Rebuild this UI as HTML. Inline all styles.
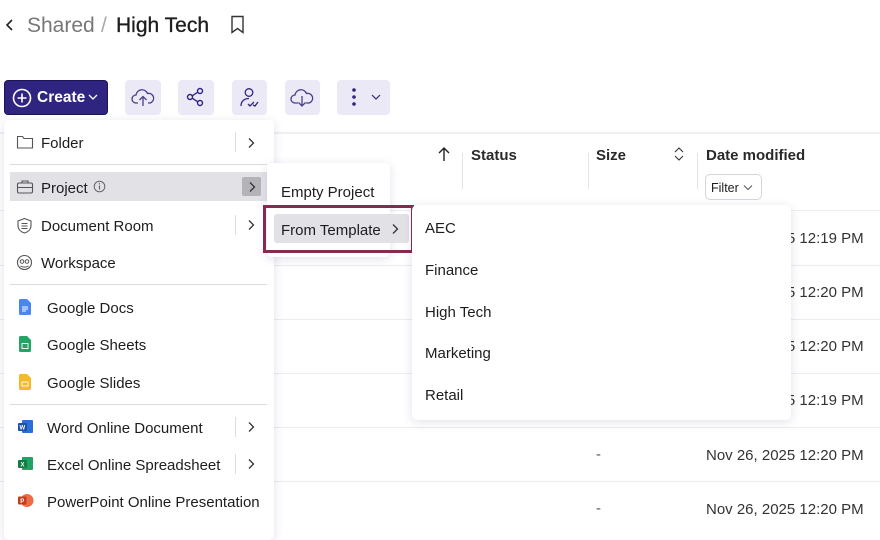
<!DOCTYPE html>
<html><head><style>
*{margin:0;padding:0;box-sizing:border-box}
body{width:880px;height:524px;overflow:hidden;background:#fff;font-family:"Liberation Sans",sans-serif;color:#1d1d1f;position:relative}
.a{position:absolute}
.t{position:absolute;font-size:15px;white-space:nowrap;line-height:1;margin-top:1px}
.btn{position:absolute;top:80px;height:35px;background:#ece9f7;border-radius:4px}
.sep{position:absolute;height:1px;background:#ececef}
.menu{position:absolute;background:#fff;border-radius:5px;box-shadow:0 2px 10px rgba(60,50,120,.15)}
.ic{position:absolute}
</style></head><body>
<!-- header -->
<svg class="a" style="left:4px;top:17px" width="10" height="16"><path d="M8 3L3 8l5 5" fill="none" stroke="#222" stroke-width="1.6"/></svg>
<div class="t" style="left:27px;top:14px;font-size:21px;color:#777">Shared</div>
<div class="t" style="left:101px;top:14px;font-size:21px;color:#aaa">/</div>
<div class="t" style="left:116px;top:14px;font-size:21px;color:#1d1d1f;-webkit-text-stroke:.3px #1d1d1f">High Tech</div>
<svg class="a" style="left:230px;top:15px" width="16" height="20"><path d="M2 1.5h11v16l-5.5-4-5.5 4z" fill="none" stroke="#333" stroke-width="1.4"/></svg>
<!-- toolbar -->
<div class="a" style="left:4px;top:80px;width:104px;height:35px;background:#2f2580;border:1px solid #1b1456;border-radius:4px"></div>
<svg class="a" style="left:11px;top:87px" width="22" height="22"><circle cx="11" cy="11" r="8.5" fill="none" stroke="#fff" stroke-width="1.6"/><path d="M11 6.5v9M6.5 11h9" stroke="#fff" stroke-width="1.6"/></svg>
<div class="t" style="left:37px;top:89px;color:#fff;font-weight:bold;font-size:15.5px">Create</div>
<svg class="a" style="left:88px;top:93px" width="10" height="8"><path d="M1 2l4 4 4-4" fill="none" stroke="#fff" stroke-width="1.3"/></svg>
<div class="btn" style="left:125px;width:36px"></div>
<svg class="a" style="left:131px;top:86px" width="24" height="22"><path d="M7 17H5a4 4 0 0 1 0-8 6 6 0 0 1 11.5-1.5A4.5 4.5 0 0 1 19 17h-2" fill="none" stroke="#4a3f8a" stroke-width="1.3"/><path d="M12 20v-9M8.5 14L12 10.5 15.5 14" fill="none" stroke="#4a3f8a" stroke-width="1.3"/></svg>
<div class="btn" style="left:178px;width:36px"></div>
<svg class="a" style="left:185px;top:86px" width="22" height="22"><circle cx="15" cy="5" r="2.5" fill="none" stroke="#2f2580" stroke-width="1.4"/><circle cx="5" cy="11" r="2.5" fill="none" stroke="#2f2580" stroke-width="1.4"/><circle cx="15" cy="17" r="2.5" fill="none" stroke="#2f2580" stroke-width="1.4"/><path d="M7.2 9.8l5.6-3.6M7.2 12.2l5.6 3.6" stroke="#2f2580" stroke-width="1.4"/></svg>
<div class="btn" style="left:232px;width:35px"></div>
<svg class="a" style="left:238px;top:86px" width="24" height="24"><circle cx="11" cy="6.5" r="3.8" fill="none" stroke="#2f2580" stroke-width="1.3"/><path d="M3 20c0-5 3.5-7.5 8-7.5M10 18l2 2 4-4M15 19l2 1 3-4" fill="none" stroke="#2f2580" stroke-width="1.3"/></svg>
<div class="btn" style="left:285px;width:35px"></div>
<svg class="a" style="left:290px;top:86px" width="24" height="22"><path d="M8 17H5a4 4 0 0 1 0-8 6 6 0 0 1 11.5-1.5A4.5 4.5 0 0 1 19 17h-3" fill="none" stroke="#4a3f8a" stroke-width="1.3"/><path d="M12 10v10M8.5 16.5L12 20l3.5-3.5" fill="none" stroke="#4a3f8a" stroke-width="1.3"/></svg>
<div class="btn" style="left:337px;width:53px"></div>
<svg class="a" style="left:350px;top:87px" width="8" height="22"><circle cx="4" cy="3" r="1.8" fill="#2f2580"/><circle cx="4" cy="10" r="1.8" fill="#2f2580"/><circle cx="4" cy="17" r="1.8" fill="#2f2580"/></svg>
<svg class="a" style="left:371px;top:93px" width="10" height="8"><path d="M1 2l4 4 4-4" fill="none" stroke="#2f2580" stroke-width="1.2"/></svg>
<!-- table -->
<div class="sep" style="left:0;top:132px;width:880px;height:2px;background:#f0f0f3"></div>
<svg class="a" style="left:437px;top:146px" width="14" height="16"><path d="M7 15V2M2 7l5-5 5 5" fill="none" stroke="#222" stroke-width="1.4"/></svg>
<div class="a" style="left:462px;top:153px;width:1px;height:36px;background:#e4e4e8"></div>
<div class="t" style="left:471px;top:147px;font-weight:bold;color:#2a2a2a">Status</div>
<div class="a" style="left:588px;top:153px;width:1px;height:36px;background:#e4e4e8"></div>
<div class="t" style="left:596px;top:147px;font-weight:bold;color:#2a2a2a">Size</div>
<svg class="a" style="left:673px;top:146px" width="12" height="16"><path d="M2 6l4-4 4 4M2 10l4 4 4-4" fill="none" stroke="#333" stroke-width="1.1"/></svg>
<div class="a" style="left:697px;top:153px;width:1px;height:36px;background:#e4e4e8"></div>
<div class="t" style="left:706px;top:147px;font-weight:bold;color:#2a2a2a">Date modified</div>
<div class="a" style="left:705px;top:174px;width:57px;height:26px;border:1px solid #d6d6dc;border-radius:5px"></div>
<div class="t" style="left:711px;top:181px;font-size:12.5px">Filter</div>
<svg class="a" style="left:743px;top:184px" width="10" height="7"><path d="M1 1.5l4 4 4-4" fill="none" stroke="#555" stroke-width="1"/></svg>
<div class="sep" style="left:0;top:210px;width:880px"></div>
<div class="sep" style="left:0;top:265px;width:880px"></div>
<div class="sep" style="left:0;top:319px;width:880px"></div>
<div class="sep" style="left:0;top:373px;width:880px"></div>
<div class="sep" style="left:0;top:427px;width:880px"></div>
<div class="sep" style="left:0;top:481px;width:880px"></div>
<div class="t" style="left:706px;top:230px;color:#333">Nov 26, 2025 12:19 PM</div>
<div class="t" style="left:706px;top:284px;color:#333">Nov 26, 2025 12:20 PM</div>
<div class="t" style="left:706px;top:338px;color:#333">Nov 26, 2025 12:20 PM</div>
<div class="t" style="left:706px;top:392px;color:#333">Nov 26, 2025 12:19 PM</div>
<div class="t" style="left:596px;top:446px;color:#555">-</div>
<div class="t" style="left:706px;top:447px;color:#333">Nov 26, 2025 12:20 PM</div>
<div class="t" style="left:596px;top:500px;color:#555">-</div>
<div class="t" style="left:706px;top:501px;color:#333">Nov 26, 2025 12:20 PM</div>
<!-- menu 1 -->
<div class="menu" style="left:4px;top:120px;width:270px;height:420px"></div>
<svg class="ic" style="left:16px;top:134px" width="18" height="16"><path d="M1.5 2.5h5l1.5 2h8.5v9.5h-15z" fill="none" stroke="#555" stroke-width="1.1"/></svg>
<div class="t" style="left:41px;top:135px">Folder</div>
<div class="a" style="left:235px;top:132px;width:1px;height:20px;background:#ddd"></div>
<svg class="a" style="left:247px;top:137px" width="8" height="12"><path d="M2 1.5l4.5 4.5L2 10.5" fill="none" stroke="#333" stroke-width="1.3"/></svg>
<div class="sep" style="left:10px;top:164px;width:257px;background:#dcdce0"></div>
<div class="a" style="left:10px;top:172px;width:257px;height:29px;background:#e2e2e6"></div>
<svg class="ic" style="left:16px;top:179px" width="18" height="16"><rect x="1.5" y="4" width="15" height="10" rx="1.5" fill="none" stroke="#555" stroke-width="1.1"/><path d="M6 4V2h6v2M1.5 8.5h15" fill="none" stroke="#555" stroke-width="1.1"/></svg>
<div class="t" style="left:41px;top:180px">Project</div>
<svg class="a" style="left:93px;top:180px" width="13" height="13"><circle cx="6.5" cy="6.5" r="5.3" fill="none" stroke="#666" stroke-width="1"/><path d="M6.5 5.5v4" stroke="#666" stroke-width="1.2"/><circle cx="6.5" cy="3.8" r=".7" fill="#666"/></svg>
<div class="a" style="left:242px;top:177px;width:19px;height:19px;background:#b4b4b8;border-radius:2px"></div>
<svg class="a" style="left:248px;top:181px" width="8" height="12"><path d="M2 1.5l4.5 4.5L2 10.5" fill="none" stroke="#333" stroke-width="1.3"/></svg>
<svg class="ic" style="left:16px;top:217px" width="17" height="17"><path d="M8.5 1.5l6.5 2.5v4.5c0 4-3 6.5-6.5 7.5-3.5-1-6.5-3.5-6.5-7.5V4z" fill="none" stroke="#555" stroke-width="1.1"/><path d="M5.5 6.5h6M5.5 9h6M5.5 11.5h6" stroke="#555" stroke-width="1"/></svg>
<div class="t" style="left:41px;top:218px">Document Room</div>
<div class="a" style="left:235px;top:215px;width:1px;height:20px;background:#ddd"></div>
<svg class="a" style="left:247px;top:219px" width="8" height="12"><path d="M2 1.5l4.5 4.5L2 10.5" fill="none" stroke="#333" stroke-width="1.3"/></svg>
<svg class="ic" style="left:16px;top:254px" width="17" height="17"><circle cx="8.5" cy="8.5" r="7" fill="none" stroke="#555" stroke-width="1.1"/><circle cx="6" cy="7.5" r="1.8" fill="none" stroke="#555"/><circle cx="11" cy="7.5" r="1.8" fill="none" stroke="#555"/><path d="M4.5 12c2 1.5 6 1.5 8 0" fill="none" stroke="#555"/></svg>
<div class="t" style="left:41px;top:255px">Workspace</div>
<div class="sep" style="left:10px;top:284px;width:257px;background:#dcdce0"></div>
<svg class="ic" style="left:19px;top:299px" width="12" height="16"><path d="M0 1.5A1.5 1.5 0 0 1 1.5 0H8l4 4v10.5A1.5 1.5 0 0 1 10.5 16h-9A1.5 1.5 0 0 1 0 14.5z" fill="#4a86f0"/><path d="M3 8h6M3 10h6M3 12h4" stroke="#fff" stroke-width=".9"/></svg>
<div class="t" style="left:47px;top:300px">Google Docs</div>
<svg class="ic" style="left:19px;top:336px" width="12" height="16"><path d="M0 1.5A1.5 1.5 0 0 1 1.5 0H8l4 4v10.5A1.5 1.5 0 0 1 10.5 16h-9A1.5 1.5 0 0 1 0 14.5z" fill="#21a464"/><rect x="3" y="7.5" width="6" height="5" fill="none" stroke="#fff" stroke-width=".9"/></svg>
<div class="t" style="left:47px;top:337px">Google Sheets</div>
<svg class="ic" style="left:19px;top:374px" width="12" height="16"><path d="M0 1.5A1.5 1.5 0 0 1 1.5 0H8l4 4v10.5A1.5 1.5 0 0 1 10.5 16h-9A1.5 1.5 0 0 1 0 14.5z" fill="#f5b92c"/><rect x="3" y="8" width="6" height="4" fill="none" stroke="#fff" stroke-width=".9"/></svg>
<div class="t" style="left:47px;top:375px">Google Slides</div>
<div class="sep" style="left:10px;top:404px;width:257px;background:#dcdce0"></div>
<svg class="ic" style="left:18px;top:419px" width="16" height="15"><rect x="4" y="1" width="11" height="13" rx="1" fill="#2b6fd6"/><rect x="0" y="4" width="9" height="8" rx="1" fill="#1b4fa8"/><text x="1.5" y="10.5" font-size="6" fill="#fff" font-family="Liberation Sans" font-weight="bold">W</text></svg>
<div class="t" style="left:47px;top:420px">Word Online Document</div>
<div class="a" style="left:235px;top:417px;width:1px;height:20px;background:#ddd"></div>
<svg class="a" style="left:247px;top:421px" width="8" height="12"><path d="M2 1.5l4.5 4.5L2 10.5" fill="none" stroke="#333" stroke-width="1.3"/></svg>
<svg class="ic" style="left:18px;top:456px" width="16" height="15"><rect x="4" y="1" width="11" height="13" rx="1" fill="#21a366"/><rect x="0" y="4" width="9" height="8" rx="1" fill="#107c41"/><text x="2.5" y="10.5" font-size="6" fill="#fff" font-family="Liberation Sans" font-weight="bold">X</text></svg>
<div class="t" style="left:47px;top:457px">Excel Online Spreadsheet</div>
<div class="a" style="left:235px;top:454px;width:1px;height:20px;background:#ddd"></div>
<svg class="a" style="left:247px;top:458px" width="8" height="12"><path d="M2 1.5l4.5 4.5L2 10.5" fill="none" stroke="#333" stroke-width="1.3"/></svg>
<svg class="ic" style="left:18px;top:493px" width="16" height="15"><circle cx="9" cy="7.5" r="6.5" fill="#ed6c47"/><rect x="0" y="3.5" width="8.5" height="8" rx="1" fill="#c43e1c"/><text x="2.3" y="10" font-size="6" fill="#fff" font-family="Liberation Sans" font-weight="bold">P</text></svg>
<div class="t" style="left:47px;top:494px">PowerPoint Online Presentation</div>
<!-- menu 2 -->
<div class="menu" style="left:267px;top:163px;width:123px;height:94px"></div>
<div class="t" style="left:281px;top:184px">Empty Project</div>
<div class="a" style="left:263px;top:205px;width:151px;height:48px;border:3px solid #862b4f"></div>
<div class="a" style="left:274px;top:214px;width:135px;height:29px;background:#e2e2e6;border-radius:3px"></div>
<div class="t" style="left:281px;top:222px">From Template</div>
<svg class="a" style="left:391px;top:223px" width="8" height="12"><path d="M2 1.5l4.5 4.5L2 10.5" fill="none" stroke="#333" stroke-width="1.3"/></svg>
<!-- menu 3 -->
<div class="menu" style="left:412px;top:205px;width:379px;height:215px"></div>
<div class="t" style="left:425px;top:220px">AEC</div>
<div class="t" style="left:425px;top:262px">Finance</div>
<div class="t" style="left:425px;top:304px">High Tech</div>
<div class="t" style="left:425px;top:345px">Marketing</div>
<div class="t" style="left:425px;top:387px">Retail</div>
</body></html>
